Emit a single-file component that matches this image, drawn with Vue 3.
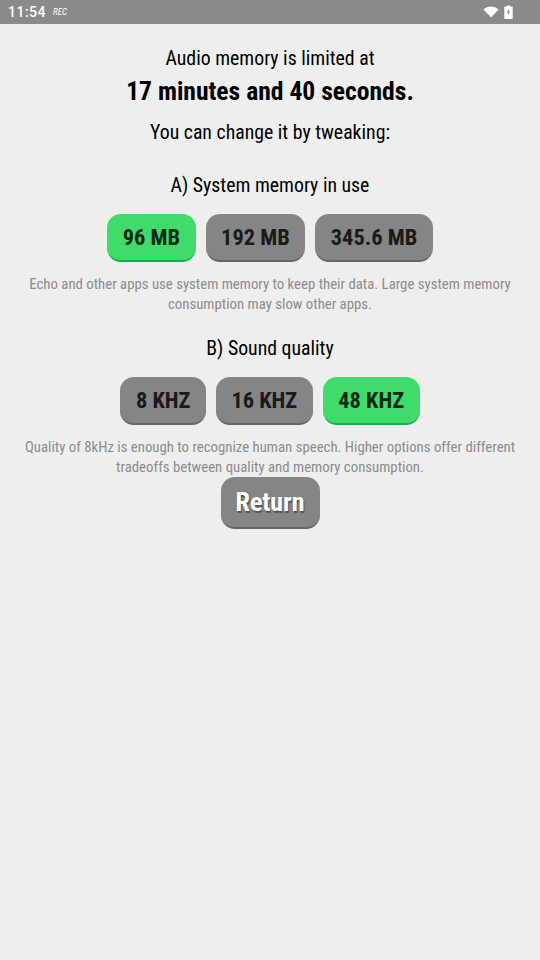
<script setup>
const memory = [
  { label: '96 MB', active: true },
  { label: '192 MB' },
  { label: '345.6 MB' }
]
const quality = [
  { label: '8 KHZ' },
  { label: '16 KHZ' },
  { label: '48 KHZ', active: true }
]
</script>

<template>
  <div class="page">
    <div class="status-bar">
      <div class="status-left">
        <span class="clock">11:54</span>
        <span class="rec">REC</span>
      </div>
      <div class="status-right">
        <svg width="16" height="12" viewBox="0 0 16 12"><path d="M0.5 3.6C2.5 1.6 5.1 0.5 8 0.5s5.5 1.1 7.5 3.1L8 11.5z" fill="#fff" /></svg>
        <svg width="9" height="14" viewBox="0 0 9 14">
          <path d="M3 0.5h3v1h2c.4 0 .7.3.7.7v11c0 .4-.3.8-.7.8H1c-.4 0-.7-.4-.7-.8v-11c0-.4.3-.7.7-.7h2z" fill="#fff" />
          <path d="M5 3.5L2.8 7.6h1.5L3.9 10.6 6.2 6.5H4.7z" fill="#8a8a8a" />
        </svg>
      </div>
    </div>

    <div class="content">
      <div class="line intro">Audio memory is limited at</div>
      <div class="line limit">17 minutes and 40 seconds.</div>
      <div class="line tweak">You can change it by tweaking:</div>

      <div class="line heading heading-a">A) System memory in use</div>
      <div class="options">
        <div v-for="o in memory" :key="o.label" class="btn" :class="{ active: o.active }">{{ o.label }}</div>
      </div>
      <div class="hint">Echo and other apps use system memory to keep their data. Large system memory consumption may slow other apps.</div>

      <div class="line heading heading-b">B) Sound quality</div>
      <div class="options">
        <div v-for="o in quality" :key="o.label" class="btn" :class="{ active: o.active }">{{ o.label }}</div>
      </div>
      <div class="hint">Quality of 8kHz is enough to recognize human speech. Higher options offer different tradeoffs between quality and memory consumption.</div>

      <div class="btn return">Return</div>
    </div>
  </div>
</template>

<style>
html, body {
  margin: 0;
  background: #eeeeee;
}
</style>

<style scoped>
.page {
  width: 540px;
  height: 960px;
  overflow: hidden;
  background: #eeeeee;
  font-family: Roboto, "Liberation Sans", sans-serif;
  font-stretch: 75%;
  color: #000;
}

.status-bar {
  height: 24px;
  background: #8a8a8a;
  display: flex;
  align-items: center;
  justify-content: space-between;
  padding: 0 27px 0 8px;
  color: #fff;
}

.status-left {
  display: flex;
  align-items: center;
  gap: 7px;
}

.clock {
  font-size: 14px;
  font-weight: 500;
  font-stretch: 100%;
  letter-spacing: 0.5px;
}

.rec {
  font-size: 9px;
  font-style: italic;
}

.status-right {
  display: flex;
  align-items: center;
  gap: 5px;
}

.content {
  display: flex;
  flex-direction: column;
  align-items: center;
  padding-top: 23px;
}

.line {
  font-size: 19.8px;
  line-height: 24px;
}

.limit {
  font-size: 25.6px;
  font-weight: 700;
  line-height: 30px;
  margin-top: 5px;
}

.tweak {
  margin-top: 15px;
}

.heading-a {
  margin-top: 29px;
}

.heading-b {
  margin-top: 23px;
}

.options {
  display: flex;
  gap: 10px;
  margin-top: 16px;
}

.btn {
  height: 46px;
  padding: 0 15.5px;
  display: flex;
  align-items: center;
  justify-content: center;
  background: #858585;
  border-bottom: 2px solid #666;
  border-radius: 14px;
  font-size: 22.4px;
  font-weight: 700;
  color: #1a1a1a;
}

.btn.active {
  background: #3fdc6c;
  border-bottom-color: #12b04a;
  color: #0e2a16;
}

.hint {
  width: 500px;
  margin-top: 12px;
  text-align: center;
  font-size: 14.8px;
  line-height: 20px;
  color: #8c8c8c;
}

.return {
  height: 50px;
  margin-top: 0;
  padding: 0 15px;
  font-size: 26px;
  color: #fff;
  text-shadow: 1px 2px 1px #555;
}
</style>
